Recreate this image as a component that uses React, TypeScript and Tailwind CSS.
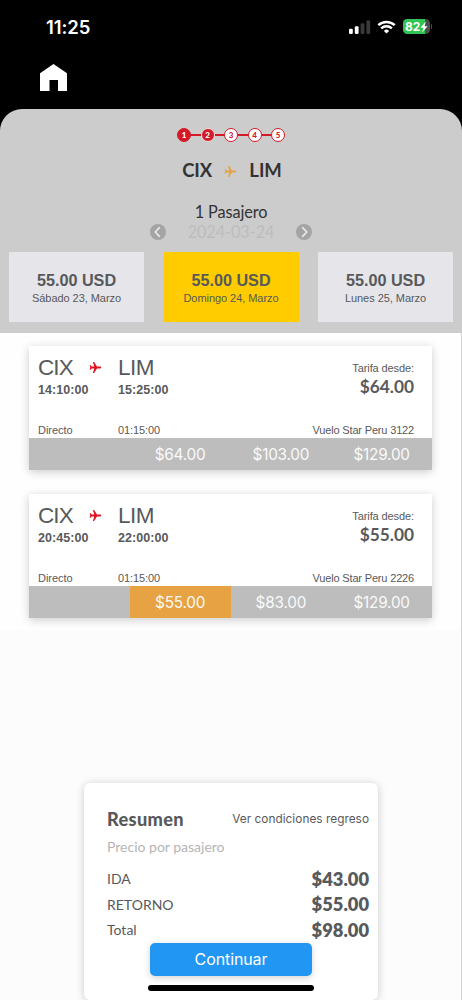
import React, { useState } from 'react';
import clsx from 'clsx';

const days = [
    { id: 1, price: '55.00 USD', date: 'Sábado 23, Marzo' },
    { id: 2, price: '55.00 USD', date: 'Domingo 24, Marzo' },
    { id: 3, price: '55.00 USD', date: 'Lunes 25, Marzo' },
];

const flights = [
    { id: 3122, departure: '14:10:00', arrival: '15:25:00', from: '$64.00', fares: ['', '$64.00', '$103.00', '$129.00'] },
    { id: 2226, departure: '20:45:00', arrival: '22:00:00', from: '$55.00', fares: ['', '$55.00', '$83.00', '$129.00'] },
];

const summary = [
    { label: 'IDA', amount: '$43.00' },
    { label: 'RETORNO', amount: '$55.00' },
    { label: 'Total', amount: '$98.00' },
];

const Plane = ({ className }: { className: string }) => (
    <svg viewBox="0 0 24 24" className={className} fill="currentColor">
        <path d="M22.5 12c0-1-.8-1.7-1.8-1.7h-6L9.5 2H7.2l2.6 8.3H4.9L3 7.7H1.1L2.3 12l-1.2 4.3H3l1.9-2.6h4.9L7.2 22h2.3l5.2-8.3h6c1 0 1.8-.7 1.8-1.7z" />
    </svg>
);

const StatusBar = () => (
    <div className="flex h-[53px] items-center justify-between pr-[30px] pl-[46px] text-white">
        <span className="font-['Inter',sans-serif] text-[18.5px] leading-6 font-semibold tracking-[-0.1px]">11:25</span>
        <div className="flex items-center">
            <svg width="22" height="14" viewBox="0 0 22 14" className="mr-[6px]">
                <rect x="0" y="8.7" width="3.8" height="5.3" rx="1.2" fill="#fff" />
                <rect x="5.8" y="6.2" width="3.8" height="7.8" rx="1.2" fill="#fff" />
                <rect x="11.6" y="3.3" width="3.8" height="10.7" rx="1.2" fill="#3a3a3a" />
                <rect x="17.4" y="0.3" width="3.8" height="13.7" rx="1.2" fill="#3a3a3a" />
            </svg>
            <svg width="19" height="14" viewBox="0 0 19 14" fill="none" stroke="#fff" className="mr-[7px]">
                <path d="M1.3 5.2a11.8 11.8 0 0 1 16.4 0" strokeWidth="2.5" />
                <path d="M4.2 8.3a7.7 7.7 0 0 1 10.6 0" strokeWidth="2.4" />
                <path d="M9.5 13.5 6.9 10.9a3.7 3.7 0 0 1 5.2 0z" fill="#fff" stroke="none" />
            </svg>
            <div className="relative flex h-[15px] w-[27px] items-center overflow-hidden rounded-[4.5px] bg-[#4d4d4f]">
                <div className="h-full w-[22.5px] bg-[#30c553]" />
                <span className="absolute top-[2px] left-[2.5px] font-['Inter',sans-serif] text-[12px] leading-none font-bold">82</span>
                <svg width="8" height="12" viewBox="0 0 8 12" className="absolute left-[17.5px]">
                    <path d="M5.8.6.4 6.8h3l-1.3 4.7 5.5-6.3h-3z" fill="#fff" />
                </svg>
            </div>
            <div className="ml-px h-[5px] w-[1.5px] rounded-r-full bg-[#4d4d4f]" />
        </div>
    </div>
);

const Steps = () => (
    <div className="flex h-[14px] items-center justify-center">
        {[1, 2, 3, 4, 5].map((step) => (
            <React.Fragment key={step}>
                {step > 1 && <div className="h-[2px] w-[9.5px] bg-[#d31a26]" />}
                <div
                    className={clsx(
                        "flex size-[14px] items-center justify-center rounded-full border font-['Lato',sans-serif] text-[8px] leading-none font-black",
                        step === 1 && 'border-[#d31a26] bg-[#d31a26] text-white',
                        step === 2 && 'border-[#f3dcdc] bg-[#d31a26] text-white',
                        step > 2 && 'border-[#d31a26] bg-white text-[#d31a26]',
                    )}
                >
                    {step}
                </div>
            </React.Fragment>
        ))}
    </div>
);

const Arrow = ({ d }: { d: string }) => (
    <button className="flex size-4 items-center justify-center rounded-full bg-[#a4a4a4]">
        <svg width="16" height="16" viewBox="0 0 16 16" fill="none" stroke="#e8e8e8" strokeWidth="1.7">
            <path d={d} />
        </svg>
    </button>
);

const FlightCard = ({ flight, selected, onSelect }) => (
    <div className="h-[124px] w-[403px] bg-white text-[#58595b] shadow-[0_2px_9px_rgba(0,0,0,0.2)]">
        <div className="flex h-[92px] flex-col justify-between pt-[9px] pr-[18px] pl-[9px]">
            <div className="flex">
                <div className="w-[51px]">
                    <p className="text-[22.5px] leading-[26px] tracking-[-0.9px]">CIX</p>
                    <p className="text-[12.5px] leading-[18px] font-bold tracking-[0.05px]">{flight.departure}</p>
                </div>
                <Plane className="mt-[6px] size-[13px] text-[#df1420]" />
                <div className="ml-4 w-[80px]">
                    <p className="text-[22.5px] leading-[26px] tracking-[-0.5px]">LIM</p>
                    <p className="text-[12.5px] leading-[18px] font-bold tracking-[0.05px]">{flight.arrival}</p>
                </div>
                <div className="ml-auto text-right">
                    <p className="pt-[5px] text-[11px] leading-4 tracking-[-0.1px]">Tarifa desde:</p>
                    <p className="font-['Lato',sans-serif] text-[17.3px] leading-[22px] font-bold">{flight.from}</p>
                </div>
            </div>
            <div className="flex h-4 text-[11px] leading-4">
                <span className="w-20 tracking-[-0.05px]">Directo</span>
                <span className="tracking-[-0.1px]">01:15:00</span>
                <span className="ml-auto tracking-[-0.17px]">Vuelo Star Peru {flight.id}</span>
            </div>
        </div>
        <div className="grid h-8 grid-cols-4 bg-[#bdbdbd] font-['Inter',sans-serif] text-[15.3px] tracking-[-0.2px] text-[#fafafa]">
            {flight.fares.map((fare, i) => (
                <div
                    key={i}
                    onClick={() => fare && onSelect(`${flight.id}-${i}`)}
                    className={clsx('flex items-center justify-center pt-[2px]', selected === `${flight.id}-${i}` && 'bg-[#e6a243]')}
                >
                    {fare}
                </div>
            ))}
        </div>
    </div>
);

const Summary = () => (
    <div className="ml-[84px] h-[217px] w-[294px] rounded-[6px] bg-white pt-[23px] pr-[9px] pl-[23px] font-['Lato',sans-serif] text-[#58595b] shadow-[0_1px_8px_rgba(0,0,0,0.2)]">
        <div className="flex h-[26px] items-center justify-between">
            <h2 className="pt-px text-[18.2px] font-black tracking-[0.3px]">Resumen</h2>
            <a className="pt-px font-['Inter',sans-serif] text-[11.8px] tracking-[0.04px]">Ver condiciones regreso</a>
        </div>
        <p className="mt-[5px] h-5 text-[14px] leading-5 text-[#b5b5b5]">Precio por pasajero</p>
        <div className="mt-[9px]">
            {summary.map((row) => (
                <div key={row.label} className="flex h-[25.5px] items-center justify-between">
                    <span className="text-[14px]">{row.label}</span>
                    <span className="pt-px text-[18.3px] font-extrabold">{row.amount}</span>
                </div>
            ))}
        </div>
        <button className="ml-[43px] block h-[33px] w-[162px] rounded-[5px] bg-[#2196f3] font-['Inter',sans-serif] text-[16px] tracking-[-0.1px] text-white shadow-[0_2px_7px_rgba(0,0,0,0.18)]">
            Continuar
        </button>
        <div className="mt-[9px] ml-[41px] h-[6px] w-[166px] rounded-full bg-black" />
    </div>
);

const App = () => {
    const [day, setDay] = useState(2);
    const [selected, setSelected] = useState('2226-1');

    return (
        <div className="flex h-[1000px] w-[462px] flex-col overflow-hidden bg-[#fcfcfc] font-['Liberation_Sans',sans-serif] whitespace-nowrap">
            <header className="bg-black">
                <StatusBar />
                <div className="h-14 pt-[11px] pl-[40px]">
                    <svg width="27" height="27" viewBox="0 0 27 27" fill="#fff">
                        <path d="M0 9.3 13.5 0 27 9.3V27h-9V16H9.5v11H0z" />
                    </svg>
                </div>
                <section className="h-56 rounded-t-[22px] bg-[#ccc] pt-[19px]">
                    <Steps />
                    <div className="mt-[17px] flex h-6 items-center justify-center pl-[2px] font-['Lato',sans-serif] text-[18.5px] font-bold text-[#333]">
                        <span>CIX</span>
                        <Plane className="mx-[12px] size-[13px] text-[#e6a243]" />
                        <span>LIM</span>
                    </div>
                    <p className="mt-[19px] h-5 text-center font-['Lato',sans-serif] text-[16.3px] leading-5 tracking-[-0.1px] text-[#333]">1 Pasajero</p>
                    <div className="flex h-5 items-center justify-between px-[150px]">
                        <Arrow d="M9.8 3.2 5.3 8l4.5 4.8" />
                        <span className="pt-px font-['Lato',sans-serif] text-[16.3px] tracking-[-0.1px] text-[#bdbdbd]">2024-03-24</span>
                        <Arrow d="M6.2 3.2 10.7 8l-4.5 4.8" />
                    </div>
                    <div className="mt-[10px] flex justify-between px-[9px]">
                        {days.map((item) => (
                            <button
                                key={item.id}
                                onClick={() => setDay(item.id)}
                                className={clsx('h-[70px] w-[135px] pt-[2px] text-[#58595b]', day === item.id ? 'bg-[#ffcc00]' : 'bg-[#e5e5ea]')}
                            >
                                <p className="text-[16.2px] leading-[19px] font-bold">{item.price}</p>
                                <p className="text-[11px] leading-4 tracking-[-0.05px]">{item.date}</p>
                            </button>
                        ))}
                    </div>
                </section>
            </header>
            <main className="flex grow flex-col justify-between border-r border-[#d2d2d2]">
                <div className="flex h-[297px] flex-col gap-6 bg-[#fefefe] pt-[13px] pl-[29px]">
                    {flights.map((flight) => (
                        <FlightCard key={flight.id} flight={flight} selected={selected} onSelect={setSelected} />
                    ))}
                </div>
                <Summary />
            </main>
        </div>
    );
};

export default App;
